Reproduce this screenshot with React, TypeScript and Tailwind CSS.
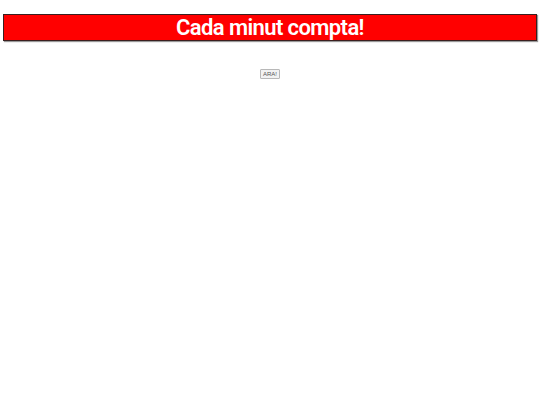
import React from 'react';

export default function App() {
  return (
    <div className="w-[540px] h-[405px] bg-white" style={{ fontFamily: '"Liberation Sans", Arial, sans-serif' }}>
      <div className="pt-[14px] px-[3px]">
        <h1 className="h-[27px] bg-[#ff0000] border border-[#3a2020] shadow-[1px_1px_1px_rgba(0,0,0,0.4)] flex items-center justify-center text-white font-semibold text-[22px] leading-none tracking-[-0.6px] font-['Roboto',sans-serif]">
          Cada minut compta!
        </h1>
      </div>
      <div className="flex justify-center pt-[28px]">
        <button className="h-[10px] w-[20px] border border-[#b8b8b8] bg-[#f2f2f2] text-[6px] leading-none text-[#555] rounded-[1px]">
          ARA!
        </button>
      </div>
    </div>
  );
}
